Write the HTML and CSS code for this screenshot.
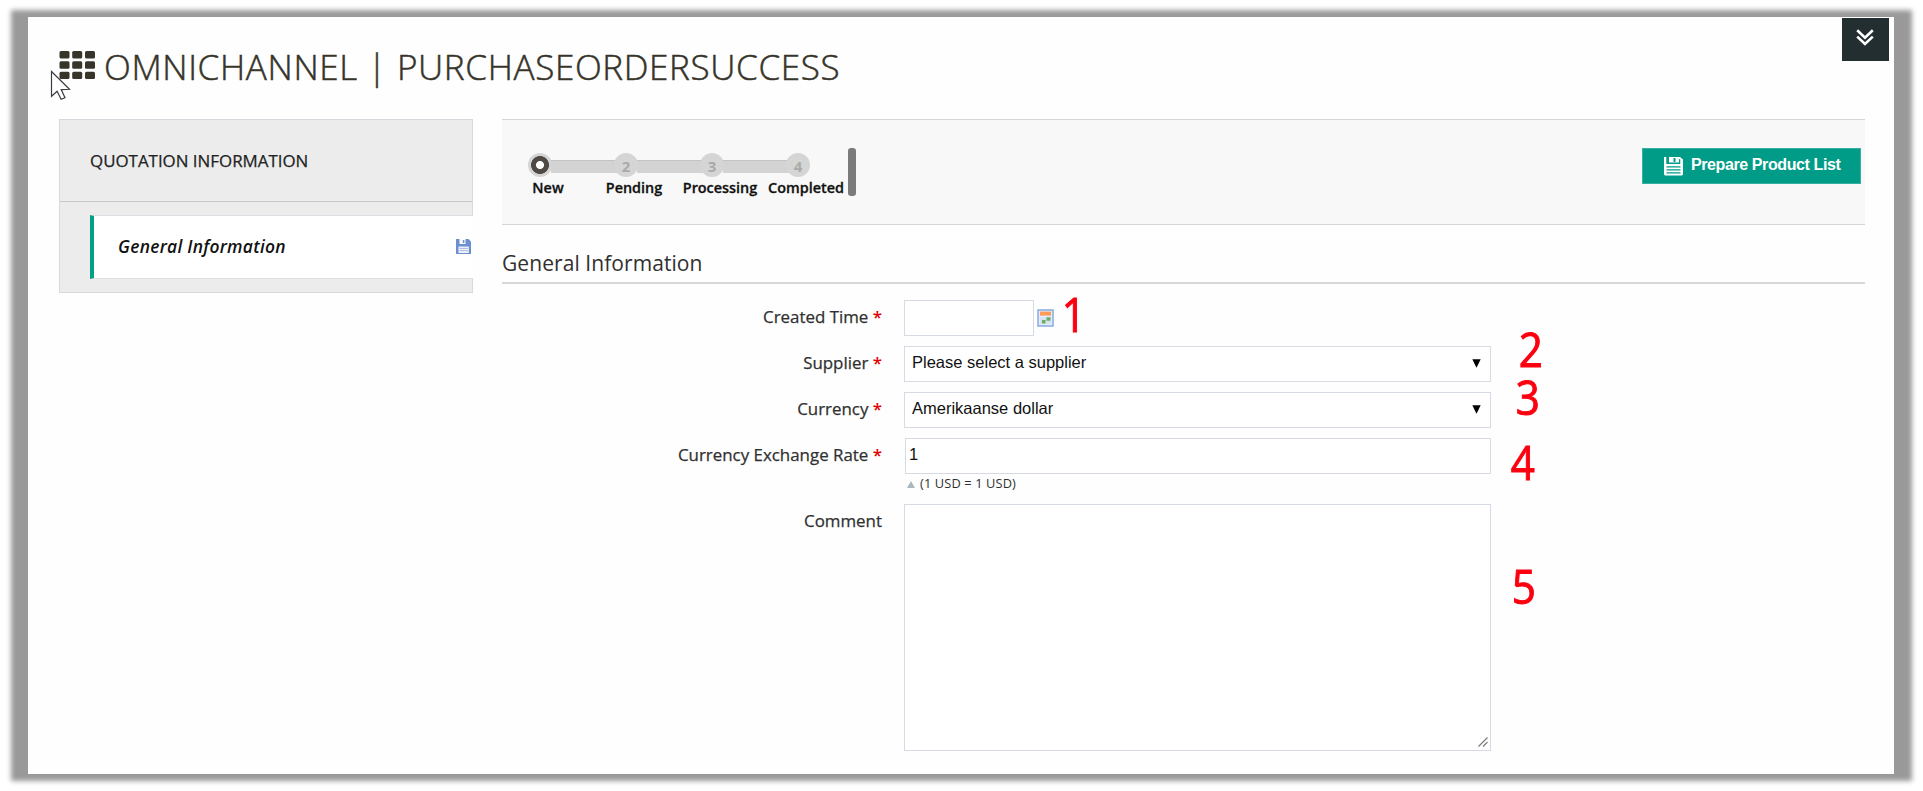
FILE: index.html
```html
<!DOCTYPE html>
<html lang="en">
<head>
<meta charset="utf-8">
<title>Omnichannel | PurchaseOrderSuccess</title>
<link rel="stylesheet" href="styles.css">
</head>
<body>
<div class="frame">
  <div class="page">
    <button class="toggle" aria-label="Expand">
      <svg width="18" height="18" viewBox="0 0 18 18"><path d="M1.2 2.2 9 9.6l7.8-7.4M1.2 8.6 9 16l7.8-7.4" fill="none" stroke="#fff" stroke-width="2.6"/></svg>
    </button>
    <header class="title">
      <svg class="grid-icon" width="37" height="30" viewBox="0 0 37 30" fill="#37342a">
        <rect x="0.5" y="1" width="10" height="7.6" rx="1.5"/><rect x="13.2" y="1" width="10" height="7.6" rx="1.5"/><rect x="26" y="1" width="10" height="7.6" rx="1.5"/>
        <rect x="0.5" y="11.3" width="10" height="7.4" rx="1.5"/><rect x="13.2" y="11.3" width="10" height="7.4" rx="1.5"/><rect x="26" y="11.3" width="10" height="7.4" rx="1.5"/>
        <rect x="0.5" y="21.7" width="10" height="7.4" rx="1.5"/><rect x="13.2" y="21.7" width="10" height="7.4" rx="1.5"/><rect x="26" y="21.7" width="10" height="7.4" rx="1.5"/>
      </svg>
      <h1>OMNICHANNEL | PURCHASEORDERSUCCESS</h1>
    </header>
    <div class="columns">
      <aside class="sidebar">
        <h3><span>QUOTATION INFORMATION</span></h3>
        <a class="tab"><span>General Information</span>
          <svg width="15" height="15" viewBox="0 0 15 15"><path d="M0 0h12.5L15 2.5V15H0z" fill="#6b8fd0"/><path d="M3.5 0h6v5h-6z" fill="#fff"/><path d="M6.8 1h1.6v3H6.8z" fill="#6b8fd0"/><path d="M2.5 7.5h10.3V14H2.5z" fill="#f0f3fb"/><path d="M3.5 9.4h8.3M3.5 11.6h8.3" stroke="#a9b7df"/></svg>
        </a>
      </aside>
      <main class="main">
        <div class="toolbar">
          <ol class="steps">
            <li class="current"><i></i><b>New</b></li>
            <li><i>2</i><b>Pending</b></li>
            <li><i>3</i><b>Processing</b></li>
            <li><i>4</i><b>Completed</b></li>
          </ol>
          <div class="thumb"></div>
          <button class="primary">
            <svg width="19" height="20" viewBox="0 0 19 20"><path d="M0 1h2.3v7h14V3.6L14.5 2.4V1H16l3 2.6V18.5l-1 1H1l-1-1z" fill="#fff"/><path d="M5 1h10v5.5H5z" fill="#fff"/><path d="M9.5 2h2v4h-2z" fill="#009c87"/><path d="M2.5 10.8h14M2.5 13.8h14M2.5 16.8h14" stroke="#009c87" stroke-width="1.2"/></svg>
            <span>Prepare Product List</span>
          </button>
        </div>
        <h2><span>General Information</span></h2>
        <form class="form">
          <label>Created Time <em>*</em></label>
          <div class="date"><div class="input"></div>
            <svg width="17" height="18" viewBox="0 0 17 18"><rect x="1" y="1" width="15" height="16" fill="#e3eefb" stroke="#7fa6dd" stroke-width="1.4"/><rect x="3" y="2.6" width="11" height="4" fill="#ff9a57"/><path d="M3 8.3h11v6.5H3z" fill="#d5e3f0"/><path d="M9.5 8.2h4v3.5h-4zM5 11h3.5v3.5H5z" fill="#6fad66"/></svg>
          </div>
          <label>Supplier <em>*</em></label>
          <div class="input select"><span>Please select a supplier</span><svg width="9" height="9" viewBox="0 0 9 9"><path d="M.3 .3h8.4L4.5 8.7z"/></svg></div>
          <label>Currency <em>*</em></label>
          <div class="input select"><span>Amerikaanse dollar</span><svg width="9" height="9" viewBox="0 0 9 9"><path d="M.3 .3h8.4L4.5 8.7z"/></svg></div>
          <label>Currency Exchange Rate <em>*</em></label>
          <div class="rate"><div class="input"><span>1</span></div>
            <p class="note"><svg width="8" height="7" viewBox="0 0 8 7"><path d="M4 0l4 7H0z" fill="#a9b8bf"/></svg><span>(1 USD = 1 USD)</span></p></div>
          <label>Comment</label>
          <div class="input area"><svg width="10" height="10" viewBox="0 0 10 10"><path d="M.5 9.5l9-9M5 9.5l4.5-4.5" stroke="#777" stroke-width="1.1" fill="none"/></svg></div>
        </form>
      </main>
    </div>
  </div>
</div>
<svg class="cursor" width="22" height="31" viewBox="0 0 22 31"><path d="M1.5 1.5v24.8l5.6-5.1 4 8.1 3.9-1.6-3.8-8.1 8.3-.3z" fill="#fff" stroke="#3c3b45" stroke-width="1.2"/></svg>
<span class="pin pin-1">1</span>
<span class="pin pin-2">2</span>
<span class="pin pin-3">3</span>
<span class="pin pin-4">4</span>
<span class="pin pin-5">5</span>
</body>
</html>
```
FILE: styles.css
```css
* { box-sizing: border-box; }
body {
  margin: 0;
  height: 791px;
  overflow: hidden;
  background: #fff;
  color: #303030;
  font-family: "Open Sans", "Noto Sans", sans-serif;
}
h1, h2, h3, p, ol { margin: 0; padding: 0; font-weight: 400; }
svg { display: block; flex: none; }
button { border: 0; padding: 0; }

.frame { position: relative; height: 791px; padding: 17px 29px 17px 28px; }
.frame::before {
  content: "";
  position: absolute;
  inset: 10px 11px;
  background: #999;
  filter: blur(2.8px);
}
.page {
  position: relative;
  height: 757px;
  padding: 30px 29px 0 31px;
  background: #fefefe;
}
.toggle {
  display: flex;
  justify-content: center;
  align-items: flex-start;
  position: absolute;
  top: 1px;
  right: 5px;
  width: 47px;
  height: 43px;
  padding: 10px 1px 0 0;
  background: #222e2f;
}

.title { display: flex; height: 72px; padding-top: 3px; }
.grid-icon { margin-right: 8px; }
.title h1 {
  color: #37342a;
  font-size: 35px;
  font-weight: 300;
  letter-spacing: 0.65px;
  line-height: 34px;
  white-space: nowrap;
  -webkit-text-stroke: 0.5px #37342a;
}

.columns { display: flex; gap: 29px; }
.sidebar {
  width: 414px;
  height: 174px;
  border: 1px solid #d5d8dd;
  background: #ececec;
}
.sidebar h3 {
  height: 82px;
  padding-left: 30px;
  border-bottom: 1px solid #c8c8c8;
  color: #222;
  font-size: 16.9px;
  line-height: 82px;
  -webkit-text-stroke: 0.25px #222;
}
.tab {
  display: flex;
  justify-content: space-between;
  align-items: center;
  height: 64px;
  margin: 13px -1px 0 30px;
  padding: 0 2px 2px 24px;
  border: solid #dcdfe4;
  border-width: 1px 0;
  border-left: 4px solid #00a085;
  background: #fff;
  color: #111;
  font-size: 17.4px;
  font-style: italic;
  font-weight: 600;
  letter-spacing: 0.28px;
}

.main { flex: 1; }
.toolbar {
  display: flex;
  height: 106px;
  padding: 28px 4px 0 0;
  border: solid #d6d6d9;
  border-width: 1px 0;
  background: #f8f8f8;
}
.steps { display: flex; list-style: none; width: 346px; padding: 5px 0 0 3px; }
.steps li { position: relative; width: 86px; flex: none; }
.steps li + li::before {
  content: "";
  position: absolute;
  left: -40px;
  top: 7px;
  width: 66px;
  height: 12px;
  background: #d3d3d3;
  border-top: 1px solid #c3c3c3;
}
.steps i {
  position: relative;
  z-index: 1;
  display: block;
  width: 24px;
  height: 24px;
  margin-left: 23px;
  border-radius: 50%;
  background: #d5d5d5;
  color: #aaa;
  font-size: 15px;
  font-style: normal;
  font-weight: 700;
  line-height: 27px;
  text-align: center;
}
.steps .current i {
  background: radial-gradient(circle, #fff 0 3.6px, #514943 4.4px 8.6px, #d5d5d5 9.3px);
}
.steps b {
  display: flex;
  justify-content: center;
  color: #111;
  font-size: 14.4px;
  font-weight: 600;
  line-height: 21px;
  -webkit-text-stroke: 0.3px #111;
}
.thumb { width: 8px; height: 48px; border-radius: 3px; background: #7b7b7b; }
.primary {
  display: flex;
  width: 219px;
  height: 36px;
  margin-left: auto;
  padding: 7px 0 0 21px;
  gap: 8px;
  border: 1px solid #35b09f;
  background: #009c87;
  color: #fff;
  font: bold 16px/18px "Liberation Sans", Arial, sans-serif;
  letter-spacing: -0.4px;
  white-space: nowrap;
}
.main h2 {
  height: 59px;
  padding-top: 24px;
  border-bottom: 2px solid #d8d8d8;
  font-size: 21px;
  letter-spacing: 0.07px;
  line-height: 28px;
}

.form {
  display: grid;
  grid-template-columns: 380px 587px;
  column-gap: 22px;
  grid-template-rows: 46px 46px 46px 66px 247px;
  padding-top: 16px;
}
.form label {
  font-size: 16.9px;
  line-height: 33px;
  text-align: right;
  -webkit-text-stroke: 0.25px #303030;
}
.form em { color: #e00000; font-style: normal; font-weight: 600; -webkit-text-stroke: 0; }
.input {
  display: flex;
  height: 36px;
  border: 1px solid #d6dae2;
  background: #fff;
  color: #111;
  font: 16.5px/31px "Liberation Sans", Arial, sans-serif;
}
.date { display: flex; gap: 3px; }
.date .input { width: 130px; }
.date svg { margin-top: 9px; }
.select { justify-content: space-between; padding: 0 9px 0 7px; }
.select svg { margin-top: 12px; }
.rate .input { margin-left: 1px; padding-left: 3px; }
.note { display: flex; gap: 5px; padding-left: 3px; font-size: 12.8px; letter-spacing: 0.13px; line-height: 19px; }
.note svg { margin-top: 7px; }
.area { height: 247px; justify-content: flex-end; align-items: flex-end; padding: 0 2px 3px; }

.cursor { position: absolute; left: 50px; top: 70px; }
.pin {
  position: absolute;
  color: #fd0010;
  font-size: 48px;
  line-height: 36px;
  transform: scaleX(0.88);
  -webkit-text-stroke: 1px #fd0010;
}
.pin-1 { left: 1060px; top: 296px; }
.pin-2 { left: 1517px; top: 331px; }
.pin-3 { left: 1514px; top: 379px; }
.pin-4 { left: 1509px; top: 444px; }
.pin-5 { left: 1510px; top: 568px; }
```
